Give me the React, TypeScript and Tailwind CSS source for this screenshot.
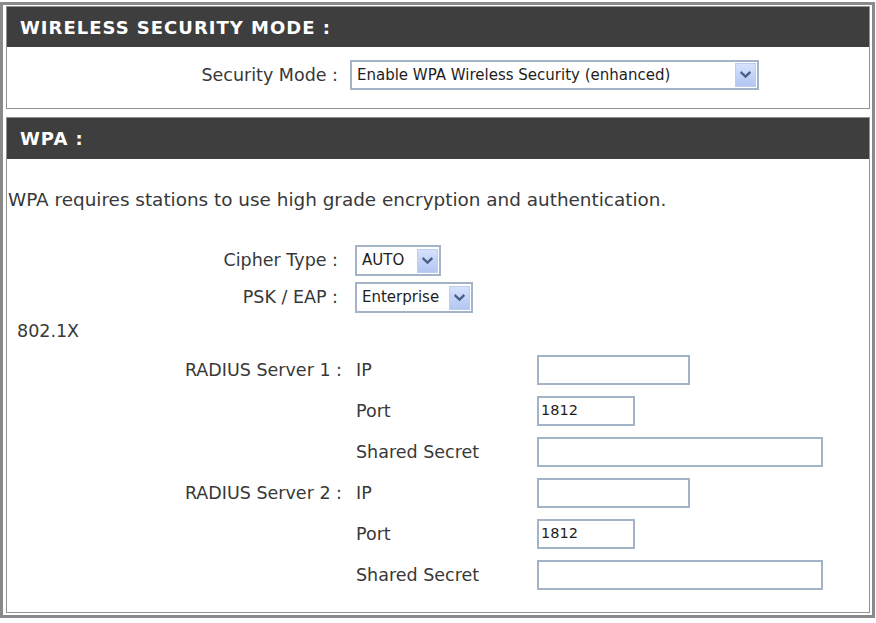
import React from "react";

const FONT = "font-['DejaVu_Sans',sans-serif]";

function Chevron() {
  return (
    <svg width="11" height="8" viewBox="0 0 11 8" aria-hidden="true">
      <path d="M1.5 1.8 L5.5 5.6 L9.5 1.8" fill="none" stroke="#4a5f86" strokeWidth="2.4" strokeLinecap="square" />
    </svg>
  );
}

function DropDown({ text, className }: { text: string; className: string }) {
  return (
    <div className={`flex items-center border-2 border-[#a3b4c9] bg-white ${className}`}>
      <span className="flex-1 whitespace-nowrap pl-[5px] text-[15px] leading-none text-[#1e1e1e]">{text}</span>
      <span className="mr-[1px] flex h-[24px] w-[21px] items-center justify-center border border-[#bccdf0] bg-gradient-to-b from-[#d6e2fd] to-[#b2c6f1]">
        <Chevron />
      </span>
    </div>
  );
}

function TextBox({ className, value }: { className: string; value?: string }) {
  return (
    <div className={`flex h-[30px] items-center border-2 border-[#a3b4c9] bg-white pl-[2px] text-[14.5px] text-[#1e1e1e] ${className}`}>
      {value}
    </div>
  );
}

function SectionHeader({ title, className }: { title: string; className: string }) {
  return (
    <div className={`flex items-center bg-[#3e3e3e] pl-[13px] text-[18px] font-bold tracking-[1px] text-white ${className}`}>
      {title}
    </div>
  );
}

function RadiusRow({ label, field, input }: { label: string; field: string; input: React.ReactNode }) {
  return (
    <div className="flex h-[30px] items-center">
      <div className="w-[336px] pr-[1px] text-right">{label}</div>
      <div className="ml-[13px] w-[181px]">{field}</div>
      {input}
    </div>
  );
}

export default function App() {
  return (
    <div className={`h-[623px] w-[876px] bg-white text-[17.5px] text-[#383838] ${FONT}`}>
      <div className="mt-[2px] h-[616px] w-[875px] border-[3px] border-[#8a8a8a] pb-[2px] pl-[3px] pr-[2px] pt-[1px]">
        {/* Wireless security mode */}
        <div className="flex h-[103px] flex-col border border-[#919191]">
          <SectionHeader title="WIRELESS SECURITY MODE :" className="h-[40px]" />
          <div className="flex flex-1 items-start pt-[13px]">
            <div className="w-[331px] text-right leading-[30px]">Security Mode :</div>
            <DropDown text="Enable WPA Wireless Security (enhanced)" className="ml-[12px] h-[30px] w-[409px]" />
          </div>
        </div>

        {/* WPA settings */}
        <div className="mt-[8px] flex h-[496px] flex-col border border-[#919191]">
          <SectionHeader title="WPA :" className="h-[41px]" />
          <div className="flex flex-1 flex-col pt-[31px]">
            <div className="h-[20px] whitespace-nowrap pl-[1px] text-[18.4px] leading-[20px]">
              WPA requires stations to use high grade encryption and authentication.
            </div>

            <div className="mt-[35px] flex h-[31px] items-center">
              <div className="w-[331px] text-right">Cipher Type :</div>
              <DropDown text="AUTO" className="ml-[17px] h-[31px] w-[86px]" />
            </div>
            <div className="mt-[6px] flex h-[31px] items-center">
              <div className="w-[331px] text-right">PSK / EAP :</div>
              <DropDown text="Enterprise" className="ml-[17px] h-[31px] w-[118px]" />
            </div>

            <div className="mt-[8px] h-[20px] pl-[10px] leading-[20px]">802.1X</div>

            <div className="mt-[14px] flex flex-col gap-[11px]">
              <RadiusRow label="RADIUS Server 1 :" field="IP" input={<TextBox className="w-[153px]" />} />
              <RadiusRow label="" field="Port" input={<TextBox className="w-[98px]" value="1812" />} />
              <RadiusRow label="" field="Shared Secret" input={<TextBox className="w-[286px]" />} />
              <RadiusRow label="RADIUS Server 2 :" field="IP" input={<TextBox className="w-[153px]" />} />
              <RadiusRow label="" field="Port" input={<TextBox className="w-[98px]" value="1812" />} />
              <RadiusRow label="" field="Shared Secret" input={<TextBox className="w-[286px]" />} />
            </div>
          </div>
        </div>
      </div>
    </div>
  );
}
